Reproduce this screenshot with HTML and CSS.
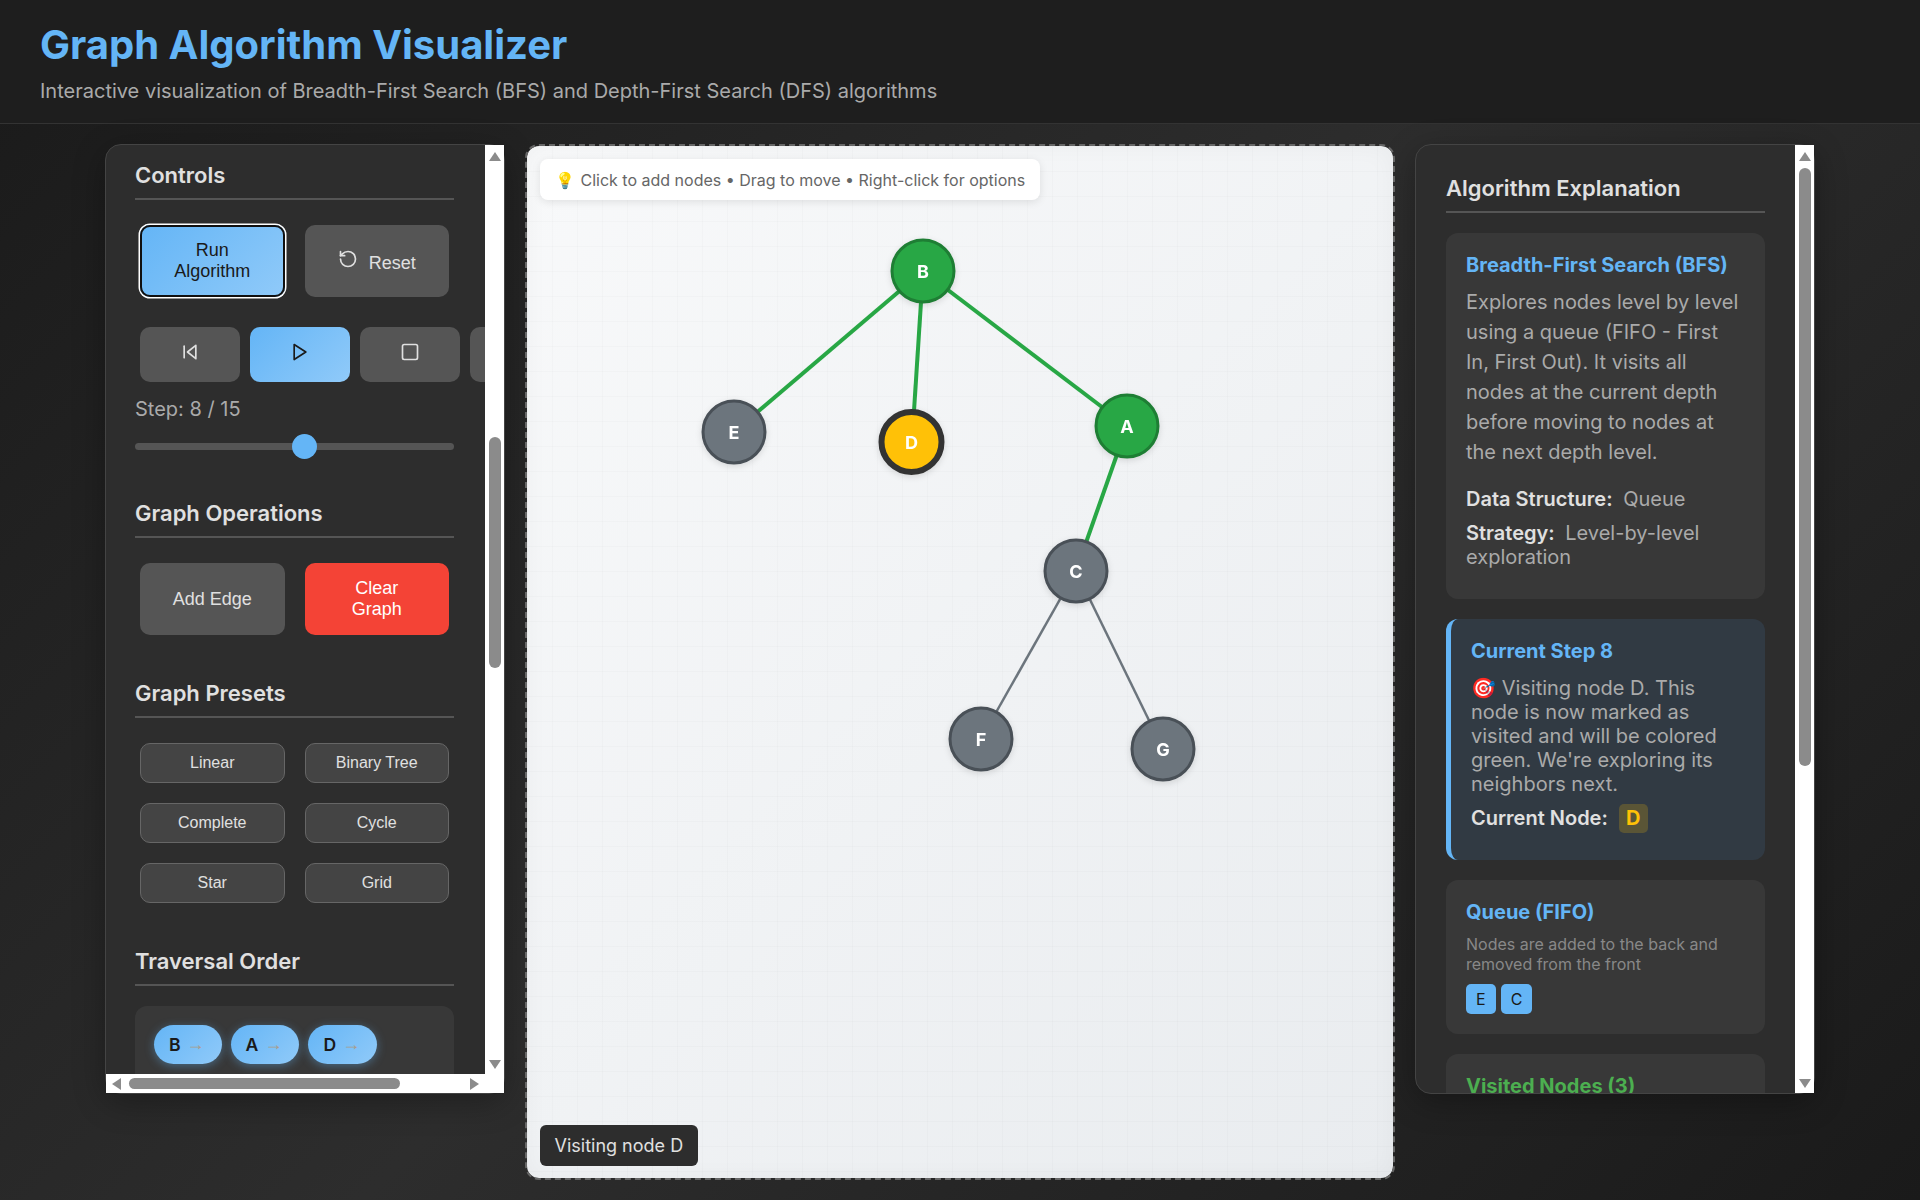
FILE: index.html
```html
<!DOCTYPE html>
<html lang="en">
<head>
    <meta charset="UTF-8">
    <meta name="viewport" content="width=device-width, initial-scale=1.0">
    <title>Graph Algorithm Visualizer</title>
    <link rel="stylesheet" href="styles.css">
</head>
<body>
    <header class="app-header">
        <h1>Graph Algorithm Visualizer</h1>
        <p>Interactive visualization of Breadth-First Search (BFS) and Depth-First Search (DFS) algorithms</p>
    </header>
    <main class="app-main">
        <aside class="panel panel-controls">
            <div class="panel-view">
                <div class="panel-body">
                    <h2 class="section-title">Controls</h2>
                    <div class="btn-grid">
                        <button class="btn btn-primary btn-focus">Run Algorithm</button>
                        <button class="btn">
                            <svg class="icon icon-text" viewBox="0 0 24 24"><path d="M3 12a9 9 0 1 0 9-9 9.75 9.75 0 0 0-6.74 2.74L3 8"/><path d="M3 3v5h5"/></svg>
                            Reset
                        </button>
                    </div>
                    <div class="playback">
                        <button class="btn-play"><svg class="icon" viewBox="0 0 24 24"><polygon points="19 20 9 12 19 4 19 20"/><line x1="5" y1="19" x2="5" y2="5"/></svg></button>
                        <button class="btn-play btn-primary"><svg class="icon" viewBox="0 0 24 24"><polygon points="5 3 19 12 5 21 5 3"/></svg></button>
                        <button class="btn-play"><svg class="icon" viewBox="0 0 24 24"><rect x="3" y="3" width="18" height="18" rx="2"/></svg></button>
                        <button class="btn-play"><svg class="icon" viewBox="0 0 24 24"><polygon points="5 4 15 12 5 20 5 4"/><line x1="19" y1="5" x2="19" y2="19"/></svg></button>
                    </div>
                    <div class="step-label">Step: 8 / 15</div>
                    <input class="step-slider" type="range" min="0" max="15" value="8">

                    <h2 class="section-title section-gap-sm">Graph Operations</h2>
                    <div class="btn-grid">
                        <button class="btn">Add Edge</button>
                        <button class="btn btn-danger">Clear Graph</button>
                    </div>

                    <h2 class="section-title section-gap">Graph Presets</h2>
                    <div class="btn-grid preset-grid">
                        <button class="btn-preset">Linear</button>
                        <button class="btn-preset">Binary Tree</button>
                        <button class="btn-preset">Complete</button>
                        <button class="btn-preset">Cycle</button>
                        <button class="btn-preset">Star</button>
                        <button class="btn-preset">Grid</button>
                    </div>

                    <h2 class="section-title section-gap">Traversal Order</h2>
                    <div class="order-box">
                        <span class="order-pill">B<span class="order-arrow">→</span></span>
                        <span class="order-pill">A<span class="order-arrow">→</span></span>
                        <span class="order-pill">D<span class="order-arrow">→</span></span>
                    </div>
                </div>
            </div>
            <div class="vbar vbar-controls">
                <span class="arrow arrow-up"></span>
                <span class="thumb"></span>
                <span class="arrow arrow-down"></span>
            </div>
            <div class="hbar">
                <span class="arrow arrow-left"></span>
                <span class="thumb"></span>
                <span class="arrow arrow-right"></span>
            </div>
        </aside>

        <section class="canvas">
            <div class="canvas-hint">💡 <span class="hint-text">Click to add nodes • Drag to move • Right-click for options</span></div>
            <svg class="graph" viewBox="0 0 866 1032">
                <g class="edges">
                    <line class="edge edge-done" x1="396" y1="125" x2="207" y2="286"/>
                    <line class="edge edge-done" x1="396" y1="125" x2="385" y2="296"/>
                    <line class="edge edge-done" x1="396" y1="125" x2="600" y2="280"/>
                    <line class="edge edge-done" x1="600" y1="280" x2="549" y2="425"/>
                    <line class="edge" x1="549" y1="425" x2="454" y2="593"/>
                    <line class="edge" x1="549" y1="425" x2="636" y2="603"/>
                </g>
                <g class="node node-done"><circle cx="396" cy="125" r="31"/><text x="396" y="125">B</text></g>
                <g class="node"><circle cx="207" cy="286" r="31"/><text x="207" y="286">E</text></g>
                <g class="node node-current"><circle cx="384.500" cy="296" r="30"/><text x="384.500" y="296">D</text></g>
                <g class="node node-done"><circle cx="600" cy="280" r="31"/><text x="600" y="280">A</text></g>
                <g class="node"><circle cx="549" cy="425" r="31"/><text x="549" y="425">C</text></g>
                <g class="node"><circle cx="454" cy="593" r="31"/><text x="454" y="593">F</text></g>
                <g class="node"><circle cx="636" cy="603" r="31"/><text x="636" y="603">G</text></g>
            </svg>
            <div class="canvas-status">Visiting node D</div>
        </section>

        <aside class="panel panel-info">
            <div class="panel-view">
                <div class="panel-body">
                    <h2 class="section-title">Algorithm Explanation</h2>
                    <div class="card card-first">
                        <h3 class="card-title">Breadth-First Search (BFS)</h3>
                        <p class="card-text">Explores nodes level by level using a queue (FIFO - First In, First Out). It visits all nodes at the current depth before moving to nodes at the next depth level.</p>
                        <p class="card-fact card-fact-first"><strong>Data Structure:</strong> Queue</p>
                        <p class="card-fact"><strong>Strategy:</strong> Level-by-level exploration</p>
                    </div>
                    <div class="card card-step">
                        <h3 class="card-title">Current Step 8</h3>
                        <p class="step-text">🎯 Visiting node D. This node is now marked as visited and will be colored green. We're exploring its neighbors next.</p>
                        <p class="step-node"><strong>Current Node:</strong> <span class="node-badge">D</span></p>
                    </div>
                    <div class="card">
                        <h3 class="card-title">Queue (FIFO)</h3>
                        <p class="card-note">Nodes are added to the back and removed from the front</p>
                        <div class="tag-row">
                            <span class="tag">E</span>
                            <span class="tag">C</span>
                        </div>
                    </div>
                    <div class="card">
                        <h3 class="card-title card-title-green">Visited Nodes (3)</h3>
                    </div>
                </div>
            </div>
            <div class="vbar vbar-info">
                <span class="arrow arrow-up"></span>
                <span class="thumb"></span>
                <span class="arrow arrow-down"></span>
            </div>
        </aside>
    </main>
</body>
</html>
```

FILE: styles.css
```css
* {
    box-sizing: border-box;
}
html, body {
    height: 100%;
}
body {
    margin: 0;
    overflow: hidden;
    background: linear-gradient(135deg, #1a1a1a 0%, #2d2d2d 50%, #1a1a1a 100%);
    font-family: Inter, 'Liberation Sans', sans-serif;
    color: #e0e0e0;
}

/* header */
.app-header {
    height: 124px;
    padding: 20px 40px;
    background-color: #1e1e1e;
    border-bottom: 1px solid #333;
}
.app-header h1 {
    margin: 0 0 10px;
    font-size: 40px;
    line-height: 50px;
    font-weight: 700;
    color: #64b5f6;
}
.app-header p {
    margin: 0;
    font-size: 20px;
    line-height: 23px;
    color: #aaa;
}

/* layout */
.app-main {
    display: grid;
    grid-template-columns: 400px 870px 400px;
    gap: 20px;
    align-items: start;
    padding: 20px 105px 0;
}
.panel {
    display: grid;
    grid-template-columns: 1fr 19px;
    height: 950px;
    background-color: #2d2d2d;
    border: 1px solid #444;
    border-radius: 16px;
    box-shadow: 0 8px 32px rgba(0, 0, 0, 0.3);
}
.panel-controls {
    grid-template-rows: 1fr 19px;
}
.panel-view {
    min-width: 0;
    min-height: 0;
    overflow: hidden;
    border-radius: 15px 0 0 15px;
}
.panel-controls .panel-body {
    padding: 16px 31px 0 29px;
}
.panel-info .panel-body {
    padding: 29px 30px 0;
}

/* fake classic scrollbars */
.vbar {
    display: flex;
    flex-direction: column;
    align-items: center;
    padding: 7px 0 5px;
    background-color: #fff;
}
.hbar {
    grid-column: 1 / 3;
    display: flex;
    align-items: center;
    padding: 0 25px 0 6px;
    background-color: #fff;
}
.thumb {
    display: block;
    background-color: #8b8b8b;
    border-radius: 6px;
}
.vbar .thumb {
    width: 12px;
}
.vbar-controls .thumb {
    height: 231px;
    margin-top: 276px;
}
.vbar-info .thumb {
    height: 598px;
    margin-top: 7px;
}
.hbar .thumb {
    width: 271px;
    height: 11px;
    margin-left: 8px;
}
.arrow {
    display: block;
    width: 0;
    height: 0;
    border-style: solid;
    border-color: transparent;
}
.arrow-up {
    border-width: 0 6px 9px;
    border-bottom-color: #8b8b8b;
}
.arrow-down {
    margin-top: auto;
    border-width: 9px 6px 0;
    border-top-color: #8b8b8b;
}
.arrow-left {
    border-width: 6px 9px 6px 0;
    border-right-color: #8b8b8b;
}
.arrow-right {
    margin-left: auto;
    border-width: 6px 0 6px 9px;
    border-left-color: #8b8b8b;
}

/* left panel */
.section-title {
    margin: 0 0 25px;
    padding-bottom: 8px;
    border-bottom: 2px solid #555;
    font-size: 22px;
    line-height: 29px;
    font-weight: 600;
    color: #e0e0e0;
}
.section-gap-sm {
    margin-top: 40px;
}
.section-gap {
    margin-top: 44px;
}
.btn-grid {
    display: grid;
    grid-template-columns: 1fr 1fr;
    gap: 20px;
    padding: 0 5px;
}
.btn {
    height: 72px;
    padding: 0 30px;
    border: none;
    border-radius: 10px;
    background-color: #555;
    font-family: 'Liberation Sans', Arial, sans-serif;
    font-size: 18px;
    line-height: 21px;
    color: #e0e0e0;
}
.btn-primary {
    background: linear-gradient(135deg, #64b5f6, #90caf9);
    color: #1a1a1a;
}
.btn-focus {
    box-shadow: inset 0 0 0 2px #101010, 0 0 0 1.5px #fff;
}
.btn-danger {
    background: #f44336;
    color: #fff;
}
.icon {
    width: 20px;
    height: 20px;
    fill: none;
    stroke: currentColor;
    stroke-width: 2;
    stroke-linecap: round;
    stroke-linejoin: round;
}
.icon-text {
    margin-right: 6px;
}
.playback {
    display: flex;
    gap: 10px;
    margin-top: 30px;
    padding-left: 5px;
}
.btn-play {
    flex: none;
    width: 100px;
    height: 55px;
    padding: 0;
    border: none;
    border-radius: 10px;
    background-color: #555;
    font-size: 18px;
    color: #e0e0e0;
}
.btn-play.btn-primary {
    background: linear-gradient(135deg, #64b5f6, #90caf9);
    color: #1a1a1a;
}
.step-label {
    margin-top: 16px;
    font-size: 20px;
    line-height: 23px;
    color: #aaa;
}
.step-slider {
    display: block;
    width: 100%;
    height: 25px;
    margin: 13px 0 0;
    background: transparent;
    -webkit-appearance: none;
    appearance: none;
}
.step-slider::-webkit-slider-runnable-track {
    height: 7px;
    border-radius: 4px;
    background-color: #555;
}
.step-slider::-webkit-slider-thumb {
    -webkit-appearance: none;
    width: 25px;
    height: 25px;
    margin-top: -9px;
    border-radius: 50%;
    background-color: #64b5f6;
}
.btn-preset {
    height: 40px;
    padding: 0;
    border: 1px solid #666;
    border-radius: 10px;
    background-color: #444;
    font-family: 'Liberation Sans', Arial, sans-serif;
    font-size: 16px;
    color: #e0e0e0;
}
.order-box {
    display: flex;
    gap: 9px;
    height: 120px;
    margin-top: -5px;
    padding: 19px;
    border-radius: 12px;
    background-color: #383838;
}
.order-pill {
    display: flex;
    align-items: center;
    height: 39px;
    padding: 0 17px 0 15px;
    border-radius: 20px;
    background: linear-gradient(135deg, #64b5f6, #90caf9);
    box-shadow: 0 2px 10px rgba(100, 181, 246, 0.4);
    font-size: 17.6px;
    font-weight: 600;
    color: #1a1a1a;
}
.order-arrow {
    margin-left: 6px;
    font-family: 'Liberation Sans', Arial, sans-serif;
    font-size: 18px;
    font-weight: 400;
    color: #a89c8c;
}

/* canvas */
.canvas {
    position: relative;
    height: 1036px;
    border: 2px dashed #666;
    border-radius: 14px;
    overflow: hidden;
    box-shadow: inset 0 0 24px rgba(0, 0, 0, 0.04);
    background:
        linear-gradient(rgba(0, 0, 0, 0.017) 1px, transparent 1px) 0 0 / 25px 25px padding-box,
        linear-gradient(90deg, rgba(0, 0, 0, 0.017) 1px, transparent 1px) 0 0 / 25px 25px padding-box,
        linear-gradient(135deg, #f8f9fa, #e9ecef) padding-box;
}
.graph {
    display: block;
    width: 100%;
    height: 100%;
}
.edge {
    stroke: #6c757d;
    stroke-width: 2.5;
}
.edge-done {
    stroke: #28a745;
    stroke-width: 4;
}
.node {
    filter: drop-shadow(0 2px 3px rgba(0, 0, 0, 0.12));
}
.node circle {
    fill: #6c757d;
    stroke: #495057;
    stroke-width: 3;
}
.node text {
    fill: #fff;
    font-family: Inter, sans-serif;
    font-size: 18px;
    font-weight: 700;
    text-anchor: middle;
    dominant-baseline: central;
}
.node-done circle {
    fill: #28a745;
    stroke: #1e7e34;
}
.node-current circle {
    fill: #ffc107;
    stroke: #333;
    stroke-width: 6;
}
.canvas-hint {
    position: absolute;
    top: 13px;
    left: 13px;
    height: 41px;
    padding: 0 15px;
    border-radius: 8px;
    background-color: #fff;
    box-shadow: 0 2px 8px rgba(0, 0, 0, 0.1);
    font-size: 16px;
    line-height: 42px;
    color: #666;
    white-space: nowrap;
}
.hint-text {
    margin-left: 1px;
}
.canvas-status {
    position: absolute;
    left: 13px;
    bottom: 12px;
    height: 41px;
    padding: 0 14.5px;
    border-radius: 6px;
    background-color: #2d2d2d;
    font-size: 18px;
    line-height: 41px;
    color: #e0e0e0;
}

/* right panel */
.panel-info .section-title {
    margin-bottom: 20px;
}
.card {
    margin-bottom: 20px;
    padding: 20px;
    border-radius: 12px;
    background-color: #383838;
}
.card-title {
    margin: 0;
    font-size: 20px;
    line-height: 24px;
    font-weight: 700;
    color: #64b5f6;
}
.card-title-green {
    color: #4caf50;
}
.card-text {
    margin: 10px 0 0;
    font-size: 20px;
    line-height: 30px;
    color: #aaa;
}
.card-fact {
    margin: 10px 0 10px;
    font-size: 20px;
    line-height: 24px;
    color: #aaa;
}
.card-fact-first {
    margin-top: 20px;
}
.card-fact strong {
    margin-right: 5px;
}
.card-fact strong, .step-node strong {
    font-weight: 600;
    color: #e0e0e0;
}
.card-step {
    height: 241px;
    border-left: 5px solid #64b5f6;
    background-color: #313a43;
}
.step-text {
    margin: 13px 0 0;
    font-size: 20px;
    line-height: 24px;
    color: #aaa;
}
.step-node {
    display: flex;
    align-items: center;
    gap: 11px;
    margin: 8px 0 0;
    font-size: 20px;
    line-height: 29px;
}
.node-badge {
    width: 29px;
    height: 29px;
    border-radius: 5px;
    background-color: rgba(255, 193, 7, 0.2);
    text-align: center;
    font-weight: 700;
    color: #ffc107;
}
.card-note {
    margin: 10px 0 0;
    font-size: 16px;
    line-height: 20px;
    color: #888;
}
.tag-row {
    display: flex;
    gap: 5px;
    margin-top: 10px;
}
.tag {
    height: 30px;
    padding: 0 10px;
    border-radius: 5px;
    background-color: #64b5f6;
    font-size: 16px;
    line-height: 30px;
    text-align: center;
    color: #1a1a1a;
}
```
